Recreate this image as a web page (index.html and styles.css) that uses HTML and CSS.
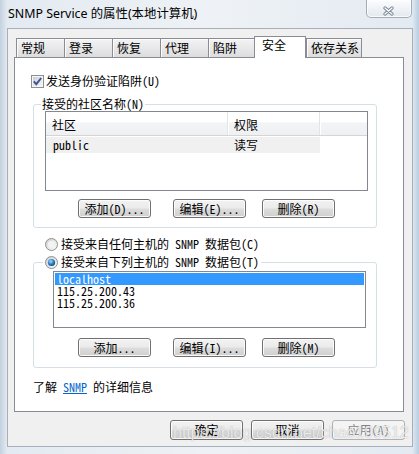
FILE: index.html
```html
<!DOCTYPE html>
<html lang="zh-CN">
<head>
<meta charset="utf-8">
<title>SNMP Service 的属性</title>
<link rel="stylesheet" href="styles.css">
</head>
<body>
<div class="window">
  <div class="titlebar">
    <div class="title">SNMP Service 的属性(本地计算机)</div>
    <div class="close">
      <svg width="46" height="18" viewBox="0 0 46 18">
        <path d="M20 9 L27 15 M27 9 L20 15" stroke="#7d8896" stroke-width="3.4" stroke-linecap="round" fill="none"/>
        <path d="M20 9 L27 15 M27 9 L20 15" stroke="#fbfcfd" stroke-width="1.4" stroke-linecap="round" fill="none"/>
      </svg>
    </div>
  </div>
  <div class="client">
    <div class="tabs">
      <div class="tab">常规</div>
      <div class="tab">登录</div>
      <div class="tab">恢复</div>
      <div class="tab">代理</div>
      <div class="tab">陷阱</div>
      <div class="tab active">安全</div>
      <div class="tab">依存关系</div>
    </div>
    <div class="panel">
      <div class="check-row">
        <svg class="checkbox" width="13" height="13" viewBox="0 0 13 13">
          <defs>
            <linearGradient id="cbg" x1="0" y1="0" x2="1" y2="1">
              <stop offset="0" stop-color="#c9ced6"/>
              <stop offset="1" stop-color="#f7f7f7"/>
            </linearGradient>
          </defs>
          <rect x="0.5" y="0.5" width="12" height="12" fill="#f6f6f6" stroke="#8e8f8f"/>
          <rect x="2" y="2" width="9" height="9" fill="url(#cbg)"/>
          <path d="M2.8 6.4 L5.3 9.2 L10.2 3" fill="none" stroke="#3b5594" stroke-width="1.9"/>
        </svg>
        <span>发送身份验证陷阱(U)</span>
      </div>

      <fieldset class="group group-community">
        <legend class="group-label">接受的社区名称(N)</legend>
        <div class="listview">
          <div class="lv-header">
            <div class="lv-col col-name">社区</div>
            <div class="lv-col col-right">权限</div>
            <div class="lv-col col-rest"></div>
          </div>
          <div class="lv-row">
            <div class="lv-cell col-name mono">public</div>
            <div class="lv-cell col-right">读写</div>
          </div>
        </div>
        <div class="btn-row">
          <div class="btn">添加(D)...</div>
          <div class="btn gap-a">编辑(E)...</div>
          <div class="btn gap-b">删除(R)</div>
        </div>
      </fieldset>

      <div class="radio-row">
        <svg class="radio" width="13" height="13" viewBox="0 0 13 13">
          <defs>
            <linearGradient id="rg1" x1="0" y1="0" x2="1" y2="1">
              <stop offset="0" stop-color="#cfd0d2"/>
              <stop offset="1" stop-color="#fbfbfb"/>
            </linearGradient>
          </defs>
          <circle cx="6.5" cy="6.5" r="6" fill="url(#rg1)" stroke="#8e8f8f"/>
          <circle cx="6.5" cy="6.5" r="3.6" fill="#f3f3f3"/>
        </svg>
        <span>接受来自任何主机的 SNMP 数据包(C)</span>
      </div>

      <fieldset class="group group-hosts">
        <legend class="group-label radio-legend">
          <svg class="radio" width="13" height="13" viewBox="0 0 13 13">
            <defs>
              <linearGradient id="rg2" x1="0" y1="0" x2="1" y2="1">
                <stop offset="0" stop-color="#cfd0d2"/>
                <stop offset="1" stop-color="#fbfbfb"/>
              </linearGradient>
              <radialGradient id="rd2" cx="0.4" cy="0.35" r="0.7">
                <stop offset="0" stop-color="#a6dcfb"/>
                <stop offset="0.55" stop-color="#2d84cc"/>
                <stop offset="1" stop-color="#0d3c6e"/>
              </radialGradient>
            </defs>
            <circle cx="6.5" cy="6.5" r="6" fill="url(#rg2)" stroke="#8e8f8f"/>
            <circle cx="6.5" cy="6.5" r="3.6" fill="url(#rd2)"/>
          </svg>
          <span>接受来自下列主机的 SNMP 数据包(T)</span>
        </legend>
        <div class="listbox mono">
          <div class="lb-item selected">localhost</div>
          <div class="lb-item">115.25.200.43</div>
          <div class="lb-item">115.25.200.36</div>
        </div>
        <div class="btn-row btn-row-2">
          <div class="btn">添加...</div>
          <div class="btn gap-a">编辑(I)...</div>
          <div class="btn gap-b">删除(M)</div>
        </div>
      </fieldset>

      <div class="info">了解 <a class="link" href="#">SNMP</a> 的详细信息</div>
    </div>

    <div class="dialog-buttons">
      <div class="btn btn-dlg">确定</div>
      <div class="btn btn-dlg">取消</div>
      <div class="btn btn-dlg disabled">应用(A)</div>
    </div>
    <div class="watermark">https://blog.csdn.net/chao199512</div>
  </div>
</div>
</body>
</html>
```

FILE: styles.css
```css
html, body {
  margin: 0;
  padding: 0;
}

body {
  width: 419px;
  height: 454px;
  overflow: hidden;
  font-family: "Noto Sans Mono CJK SC", "Noto Sans CJK SC", sans-serif;
  font-size: 12px;
  color: #000;
}

.window {
  width: 419px;
  height: 454px;
  box-sizing: border-box;
  padding: 0 6px 7px 7px;
  display: flex;
  flex-direction: column;
  background: linear-gradient(to right, #c3d1e0 0, #e3eaf1 7px, #eef2f6 50%, #e3eaf1 412px, #b9cde2 419px);
}

.titlebar {
  height: 28px;
  display: flex;
  align-items: flex-start;
  flex-shrink: 0;
}

.title {
  padding: 6px 0 0 1px;
  line-height: 16px;
  font-family: "Noto Sans", "Noto Sans CJK SC", sans-serif;
  font-size: 12.4px;
  color: #000;
}

.close {
  margin-left: auto;
  margin-right: 1px;
  width: 46px;
  height: 18px;
  box-sizing: border-box;
  border: 1px solid #a3adb9;
  border-top: 0;
  border-radius: 0 0 5px 5px;
  background: linear-gradient(#fbfcfd, #e4e9ef);
  box-shadow: inset 0 0 0 1px rgba(255,255,255,0.7);
  display: flex;
  align-items: center;
  justify-content: center;
}

.close svg {
  display: block;
  margin-left: -2px;
  margin-top: -2px;
}

.client {
  position: relative;
  flex: 1;
  background: #f0f0f0;
  border: 1px solid #a7b0ba;
  display: flex;
  flex-direction: column;
}

/* tabs */
.tabs {
  display: flex;
  align-items: flex-end;
  height: 21px;
  margin-top: 7px;
  padding-left: 8px;
}

.tab {
  position: relative;
  height: 19px;
  min-width: 49px;
  box-sizing: border-box;
  padding: 0 2px 0 4px;
  margin-right: -1px;
  border: 1px solid #898c95;
  border-bottom: 0;
  background: linear-gradient(#f3f3f3, #e6e6e6 60%, #dcdcdc);
  box-shadow: inset 1px 1px 0 #fcfcfc;
  line-height: 18px;
  font-family: "Noto Sans CJK SC", sans-serif;
  white-space: nowrap;
}

.tab.active {
  z-index: 2;
  height: 22px;
  min-width: 52px;
  margin: 0 0 -1px -2px;
  padding: 0 2px 0 7px;
  background: #fff;
  box-shadow: none;
  line-height: 16px;
}

.panel {
  margin-left: 6px;
  width: 390px;
  height: 355px;
  box-sizing: border-box;
  background: #fff;
  border: 1px solid #898c95;
  padding: 16px 0 0 0;
  display: flex;
  flex-direction: column;
  align-items: flex-start;
}

.check-row {
  display: flex;
  align-items: center;
  height: 14px;
  line-height: 14px;
  margin-left: 16px;
}

.checkbox {
  display: block;
  margin-right: 2px;
}

.radio {
  display: block;
  margin-right: 3px;
  flex-shrink: 0;
}

/* group boxes */
.group {
  margin: 0 0 0 18px;
  width: 344px;
  box-sizing: border-box;
  min-width: 0;
  border: 1px solid #d5dfe5;
  border-radius: 3px;
}

.group-label {
  line-height: 14px;
  padding: 0 1px;
  margin-left: -4px;
}

.group-community {
  margin-top: 9px;
  padding: 0 8px 9px 11px;
}

.group-hosts {
  margin-top: 4px;
  padding: 2px 10px 10px 19px;
}

.radio-legend {
  display: flex;
  align-items: center;
  margin-left: -10px;
  padding: 0 2px 0 2px;
}

/* list view */
.listview {
  height: 80px;
  box-sizing: border-box;
  border: 1px solid #828790;
  background: #fff;
}

.lv-header {
  display: flex;
  height: 24px;
  box-sizing: border-box;
  border-bottom: 1px solid #d5d5d5;
  background: linear-gradient(#ffffff, #ffffff 45%, #f3f4f6 46%, #eef0f3);
}

.lv-col {
  box-sizing: border-box;
  padding: 6px 0 0 6px;
  line-height: 14px;
  font-family: "Noto Sans CJK SC", sans-serif;
  border-right: 1px solid #e3e4e6;
  box-shadow: 1px 0 0 #fff;
}

.col-name {
  width: 182px;
}

.col-right {
  width: 92px;
}

.lv-col.col-rest {
  flex: 1;
  border-right: 0;
  box-shadow: none;
}

.lv-row {
  display: flex;
  margin-top: 1px;
  height: 16px;
  width: 274px;
  background: #f0f0f0;
  line-height: 16px;
}

.lv-cell {
  box-sizing: border-box;
  padding-left: 6px;
}

.lv-cell.col-right {
  padding-left: 6px;
  font-family: "Noto Sans CJK SC", sans-serif;
}

.mono {
  font-family: "Noto Sans Mono CJK SC", "DejaVu Sans Mono", monospace;
  font-size: 12px;
}

.lv-row .mono {
  padding-left: 7px;
}

/* list box */
.listbox {
  height: 57px;
  box-sizing: border-box;
  border: 1px solid #828790;
  padding: 1px;
  background: #fff;
}

.lb-item {
  height: 12px;
  line-height: 12px;
  padding-left: 2px;
}

.lb-item.selected {
  background: #3399ff;
  color: #fff;
}

/* buttons */
.btn-row {
  display: flex;
  margin-top: 8px;
  padding-left: 33px;
}

.btn-row-2 {
  margin-top: 10px;
  padding-left: 25px;
}

.btn {
  width: 73px;
  height: 19px;
  box-sizing: border-box;
  border: 1px solid #707070;
  border-radius: 3px;
  background: linear-gradient(#f2f2f2, #ebebeb 48%, #dddddd 52%, #cfcfcf);
  box-shadow: inset 0 0 0 1px rgba(255,255,255,0.85);
  text-align: center;
  line-height: 17px;
  white-space: nowrap;
}

.gap-a {
  margin-left: 22px;
}

.gap-b {
  margin-left: 16px;
}

.radio-row {
  display: flex;
  align-items: center;
  height: 14px;
  line-height: 14px;
  margin: 9px 0 0 30px;
}

.info {
  margin: 12px 0 0 18px;
  line-height: 14px;
}

.link {
  color: #0066cc;
  text-decoration: underline;
}

.dialog-buttons {
  display: flex;
  justify-content: flex-end;
  gap: 8px;
  margin-top: 8px;
  padding-right: 7px;
}

.btn-dlg {
  height: 20px;
  line-height: 18px;
}

.btn.disabled {
  border-color: #adb2b5;
  background: #f4f4f4;
  box-shadow: none;
  color: #838383;
}

.watermark {
  position: absolute;
  left: 165px;
  top: 395px;
  font-family: "Liberation Sans", sans-serif;
  font-size: 16px;
  line-height: 18px;
  color: rgba(255, 255, 255, 0.8);
  text-shadow: 0 0 1px rgba(90, 90, 90, 0.55);
  white-space: nowrap;
  pointer-events: none;
}
```
